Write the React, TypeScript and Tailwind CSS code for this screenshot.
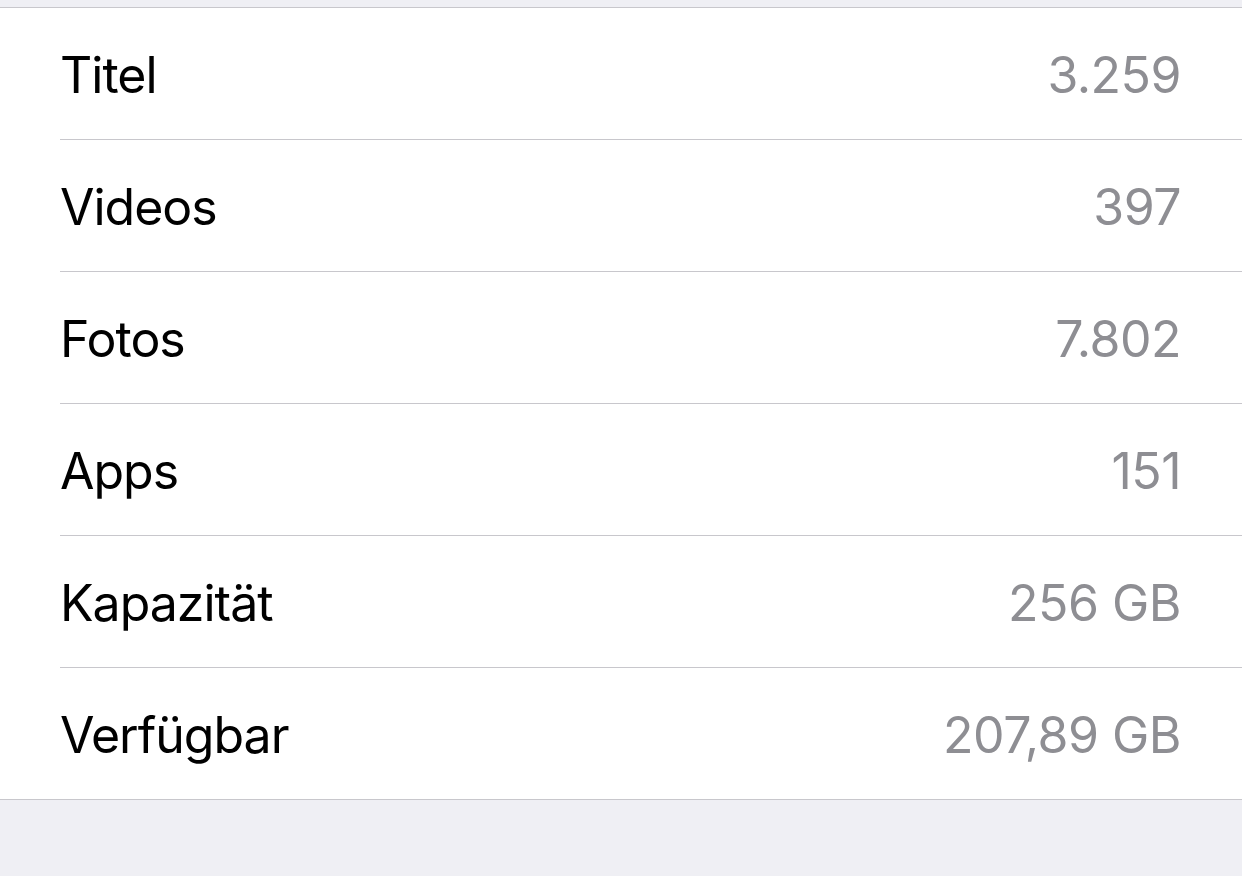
const rows = [
  { label: "Titel", value: "3.259" },
  { label: "Videos", value: "397" },
  { label: "Fotos", value: "7.802" },
  { label: "Apps", value: "151" },
  { label: "Kapazität", value: "256 GB" },
  { label: "Verfügbar", value: "207,89 GB" },
];

export default function App() {
  return (
    <div className="min-h-[876px] bg-[#efeff4] font-['Inter','Liberation_Sans',sans-serif]">
      <div className="h-[7px]" />
      <div className="bg-white border-y border-[#c8c7cc]">
        {rows.map((row, i) => (
          <div key={row.label} className="pl-[60px]">
            <div
              className={`flex items-center justify-between pr-[61px] ${
                i < rows.length - 1
                  ? "h-[132px] border-b border-[#c8c7cc]"
                  : "h-[131px]"
              }`}
            >
              <span className="pt-[3px] text-[50px] text-black tracking-[-1px]">
                {row.label}
              </span>
              <span className="pt-[3px] text-[50px] text-[#8e8e93] tracking-[-0.5px]">
                {row.value}
              </span>
            </div>
          </div>
        ))}
      </div>
    </div>
  );
}
